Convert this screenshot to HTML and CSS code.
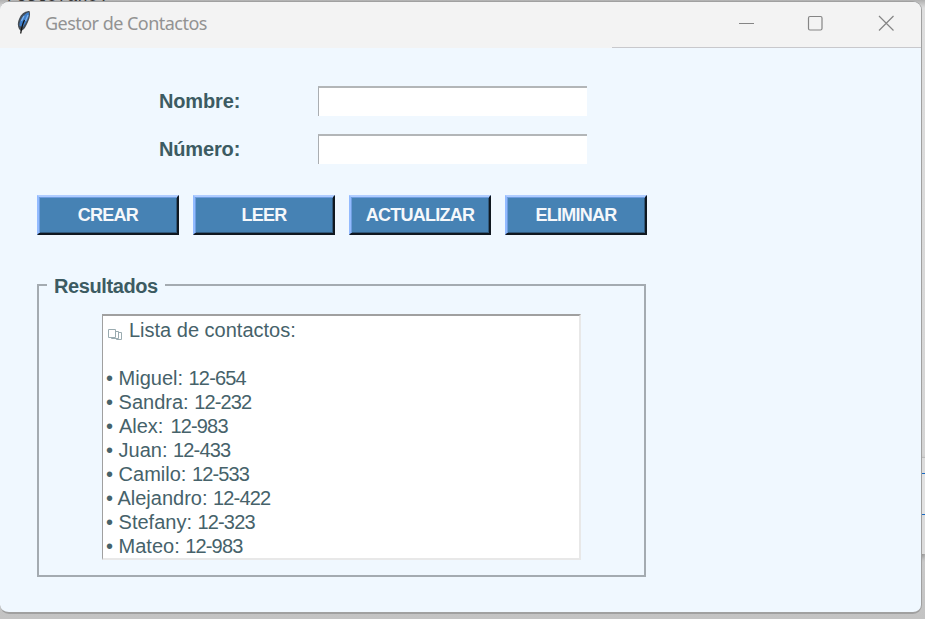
FILE: index.html
```
<!DOCTYPE html>
<html lang="es">
<head>
<meta charset="utf-8">
<title>Gestor de Contactos</title>
<link rel="stylesheet" href="styles.css">
</head>
<body>
<div class="behind-text">resto(ano)</div>
<div class="behind-panel"><div class="behind-row"></div></div>
<main class="window">
  <header class="titlebar">
    <svg class="feather" width="16" height="26" viewBox="0 0 16 26">
      <path d="M5 21 C1 18 1 12 4 7 C6 3 10 1 13.500 1 C15 5 13 11 10 16 C8.500 19 7 20 5 21Z" fill="#454d55"/>
      <path d="M3.500 16 C3 11 7 4 12.800 2.300 C13.800 7 10 13 7 17Z" fill="#3f7fca"/>
      <path d="M8.500 10 C7 13 6 15 4.700 23.500" fill="none" stroke="#111" stroke-width="1.300"/>
      <path d="M8 6 L5.500 11 M12 5 L9.500 11" stroke="#83b6ed" stroke-width="1.200"/>
    </svg>
    <h1 class="title">Gestor de Contactos</h1>
    <div class="controls">
      <svg width="160" height="20" viewBox="0 0 160 20" fill="none" stroke="#858585" stroke-width="1.200">
        <path d="M1 10.500H16"/>
        <rect x="70.500" y="3.500" width="13.500" height="13.500" rx="1.500"/>
        <path d="M141 3L155.500 17.500M155.500 3L141 17.500"/>
      </svg>
    </div>
  </header>
  <div class="content">
    <div class="form">
      <label class="label" for="nombre">Nombre:</label><input class="entry" id="nombre" type="text">
      <label class="label" for="numero">Número:</label><input class="entry" id="numero" type="text">
    </div>
    <div class="buttons">
      <button class="button">CREAR</button>
      <button class="button">LEER</button>
      <button class="button">ACTUALIZAR</button>
      <button class="button">ELIMINAR</button>
    </div>
    <fieldset class="results">
      <legend class="legend">Resultados</legend>
      <div class="list">
        <div class="line heading"><svg class="pages" width="15" height="13" viewBox="0 0 15 13" fill="none" stroke="#9aabb0"><path d="M.5 1.500H7.500V9.500H.5Z"/><path d="M7.500 3.500H10.500V10.500H3.500V9.500M10.500 4.500H13.500V11.500H8.500V10.500"/></svg>Lista de contactos:</div>
        <div class="line">&nbsp;</div>
        <div class="line">• Miguel: <span class="number">12-654</span></div>
        <div class="line">• Sandra: <span class="number">12-232</span></div>
        <div class="line short">• Alex: <span class="number">12-983</span></div>
        <div class="line">• Juan: <span class="number">12-433</span></div>
        <div class="line">• Camilo: <span class="number">12-533</span></div>
        <div class="line">• Alejandro: <span class="number">12-422</span></div>
        <div class="line">• Stefany: <span class="number">12-323</span></div>
        <div class="line">• Mateo: <span class="number">12-983</span></div>
      </div>
    </fieldset>
  </div>
</main>
</body>
</html>
```
FILE: styles.css
```
* { box-sizing: border-box; }
body {
  margin: 0;
  width: 925px;
  height: 619px;
  overflow: hidden;
  position: relative;
  background: linear-gradient(#b0b0b0 0, #dedede 8px, #d4d4d4 460px, #c3c3c3 619px);
  font-family: "Liberation Sans", Arial, sans-serif;
  color: #2f4f4f;
}
.behind-text {
  position: absolute;
  left: 6px;
  top: -13px;
  font: 17px/20px "Liberation Mono", monospace;
  color: #333;
}
.behind-panel {
  position: absolute;
  right: 0;
  top: 457px;
  width: 12px;
  height: 97px;
  padding-top: 15px;
  background: #dcdcdc;
  border-top: 1px solid #bbb;
  box-shadow: 0 3px 5px #888;
}
.behind-row {
  height: 42px;
  background: #e2e2e2;
  border: solid #1769c4;
  border-width: 1px 0;
}
.window {
  position: relative;
  width: 922px;
  height: 613px;
  margin-top: 1px;
  overflow: hidden;
  background: #f0f8ff;
  border: solid #a0a0a0;
  border-width: 1px 1px 2px 0;
  border-radius: 9px;
}
.titlebar {
  height: 46px;
  display: flex;
  align-items: flex-start;
  padding-left: 16px;
  background: linear-gradient(#c8c8cc, #c8c8cc) 612px 45px / 309px 1px no-repeat #f3f3f3;
}
.feather { margin-top: 8px; }
.title {
  margin: 8px 0 0 13px;
  font: 400 18px/26px "Noto Sans", sans-serif;
  letter-spacing: -0.53px;
  color: #929292;
}
.controls { margin: 11px 23px 0 auto; }
.controls svg { display: block; }
.content { padding: 38px 0 0 37px; }
.form {
  display: grid;
  grid-template-columns: 159px 270px;
  grid-auto-rows: 30px;
  row-gap: 18px;
  padding-left: 122px;
}
.label {
  font-weight: 700;
  font-size: 20px;
  line-height: 31px;
  letter-spacing: -0.15px;
  color: #3c5b62;
}
.entry {
  width: 269px;
  height: 30px;
  padding: 2px;
  background: #fff;
  border: solid #aaaeb2;
  border-width: 2px 0 0 1px;
  border-top-color: #b3b6b8;
  outline: none;
}
.buttons {
  display: flex;
  gap: 14px;
  margin-top: 31px;
}
.button {
  width: 142px;
  height: 40px;
  padding: 0;
  background: #4682b4;
  border: 2px solid;
  border-color: #b0cdff #101820 #101820 #93bbff;
  box-shadow: inset 1px 1px #6e9dde, inset -1px -1px #31597b;
  color: #f5f8fb;
  font: 700 18px/34px "Liberation Sans", Arial, sans-serif;
  letter-spacing: -0.75px;
}
.results {
  width: 609px;
  height: 303px;
  margin: 39px 0 0;
  padding: 19px 0 0 63px;
  border: 2px solid #a4abb1;
}
.legend {
  height: 21px;
  margin-left: -55px;
  padding: 0 7px;
  font-size: 20px;
  font-weight: 700;
  line-height: 25px;
  letter-spacing: -0.4px;
  color: #3c5b62;
}
.list {
  width: 479px;
  height: 246px;
  padding: 2px 0 0 3px;
  overflow: hidden;
  background: #fff;
  border: solid #a0a0a0;
  border-width: 2px 2px 2px 1px;
  border-right-color: #e8e8e8;
  border-bottom-color: #e8e8e8;
}
.line {
  height: 24px;
  font-size: 20px;
  line-height: 24px;
  white-space: pre;
  color: #46626a;
}
.number { letter-spacing: -0.85px; }
.short { word-spacing: 1.5px; }
.heading { display: flex; }
.pages { margin: 10px 6px 0 2px; }
```
